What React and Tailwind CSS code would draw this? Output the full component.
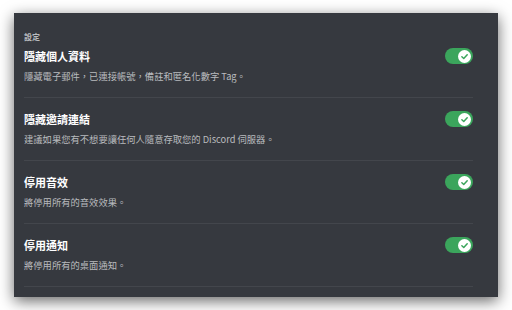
// App.jsx
const rows = [
  { title: "隱藏個人資料", desc: "隱藏電子郵件，已連接帳號，備註和匿名化數字 Tag。" },
  { title: "隱藏邀請連結", desc: "建議如果您有不想要讓任何人隨意存取您的 Discord 伺服器。" },
  { title: "停用音效", desc: "將停用所有的音效效果。" },
  { title: "停用通知", desc: "將停用所有的桌面通知。" },
];

function Toggle() {
  return (
    <div className="mt-[-1px] w-[28px] h-[16px] rounded-full bg-[#3ba55c] flex items-center justify-end pr-[2px] shrink-0">
      <div className="w-[13px] h-[13px] rounded-full bg-white flex items-center justify-center">
        <svg width="9" height="9" viewBox="0 0 12 12" fill="none">
          <path d="M2.5 6.3 L5 8.6 L9.6 3.6" stroke="#3ba55c" strokeWidth="2" strokeLinecap="round" strokeLinejoin="round" />
        </svg>
      </div>
    </div>
  );
}

function Row({ title, desc, first }) {
  return (
    <div className={first ? "pt-[7px]" : "pt-[14px]"}>
      <div className="flex items-start justify-between">
        <div>
          <div className="text-[11px] leading-[14px] font-bold text-white">{title}</div>
          <div className="mt-[7px] text-[9.3px] leading-[12px] text-[#b9bbbe]">{desc}</div>
        </div>
        <Toggle />
      </div>
      <div className="mt-[15px] h-px bg-[#43464c]" />
    </div>
  );
}

export default function App() {
  return (
    <div className="w-[512px] h-[310px] bg-white pt-[13px] pl-[14px]" style={{ fontFamily: '"Noto Sans CJK TC", "Noto Sans", sans-serif' }}>
      <div className="w-[484px] h-[284px] bg-[#36393f] shadow-[0_4px_14px_rgba(0,0,0,0.6)] pt-[19px] pl-[10px] pr-[25px]">
        <div className="text-[8px] leading-[10px] font-semibold text-[#b9bbbe]">設定</div>
        <div>
          {rows.map((r, i) => (
            <Row key={r.title} {...r} first={i === 0} />
          ))}
        </div>
      </div>
    </div>
  );
}
